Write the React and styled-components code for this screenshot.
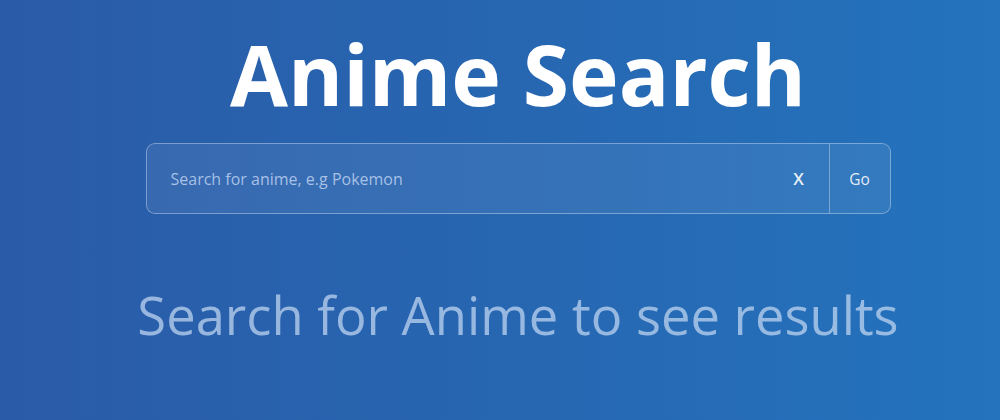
import React from "react";
import styled, { createGlobalStyle } from "styled-components";

const Global = createGlobalStyle`
  html, body { margin: 0; padding: 0; }
  body {
    width: 1000px;
    height: 420px;
    overflow: hidden;
    font-family: "Open Sans", "Noto Sans", sans-serif;
  }
`;

const Page = styled.div`
  width: 1000px;
  height: 420px;
  box-sizing: border-box;
  background: linear-gradient(90deg, #2a5ba8 0%, #2766b1 50%, #2473bd 100%);
  display: flex;
  flex-direction: column;
  align-items: center;
  padding-left: 36px;
`;

const Title = styled.h1`
  margin: 18px 0 0;
  font-family: "Open Sans", sans-serif;
  font-weight: 700;
  font-size: 84px;
  line-height: 112px;
  color: #ffffff;
`;

const SearchBar = styled.div`
  margin-top: 13px;
  width: 745px;
  height: 71px;
  box-sizing: border-box;
  display: flex;
  border: 1px solid rgba(255, 255, 255, 0.35);
  border-radius: 9px;
  background: rgba(255, 255, 255, 0.07);
  overflow: hidden;
`;

const Input = styled.input`
  flex: 1;
  min-width: 0;
  border: none;
  outline: none;
  background: transparent;
  padding: 0 0 0 24px;
  font-family: "Open Sans", sans-serif;
  font-size: 16px;
  color: #fff;
  &::placeholder { color: rgba(200, 218, 245, 0.78); }
`;

const ClearButton = styled.button`
  border: none;
  background: transparent;
  width: 62px;
  font-family: "Open Sans", sans-serif;
  font-size: 17px;
  font-weight: 600;
  color: rgba(255, 255, 255, 0.9);
  cursor: pointer;
  padding: 0 0 0 2px;
`;

const GoButton = styled.button`
  border: none;
  border-left: 1px solid rgba(255, 255, 255, 0.35);
  background: transparent;
  width: 61px;
  font-family: "Open Sans", sans-serif;
  font-size: 15.5px;
  color: rgba(255, 255, 255, 0.88);
  cursor: pointer;
  padding: 0;
`;

const Message = styled.p`
  margin: 65px 0 0;
  font-family: "Open Sans", sans-serif;
  font-weight: 400;
  font-size: 52.5px;
  line-height: 72px;
  color: rgba(190, 212, 240, 0.75);
`;

export default function App() {
  return (
    <>
      <Global />
      <Page>
        <Title>Anime Search</Title>
        <SearchBar>
          <Input placeholder="Search for anime, e.g Pokemon" />
          <ClearButton>X</ClearButton>
          <GoButton>Go</GoButton>
        </SearchBar>
        <Message>Search for Anime to see results</Message>
      </Page>
    </>
  );
}
